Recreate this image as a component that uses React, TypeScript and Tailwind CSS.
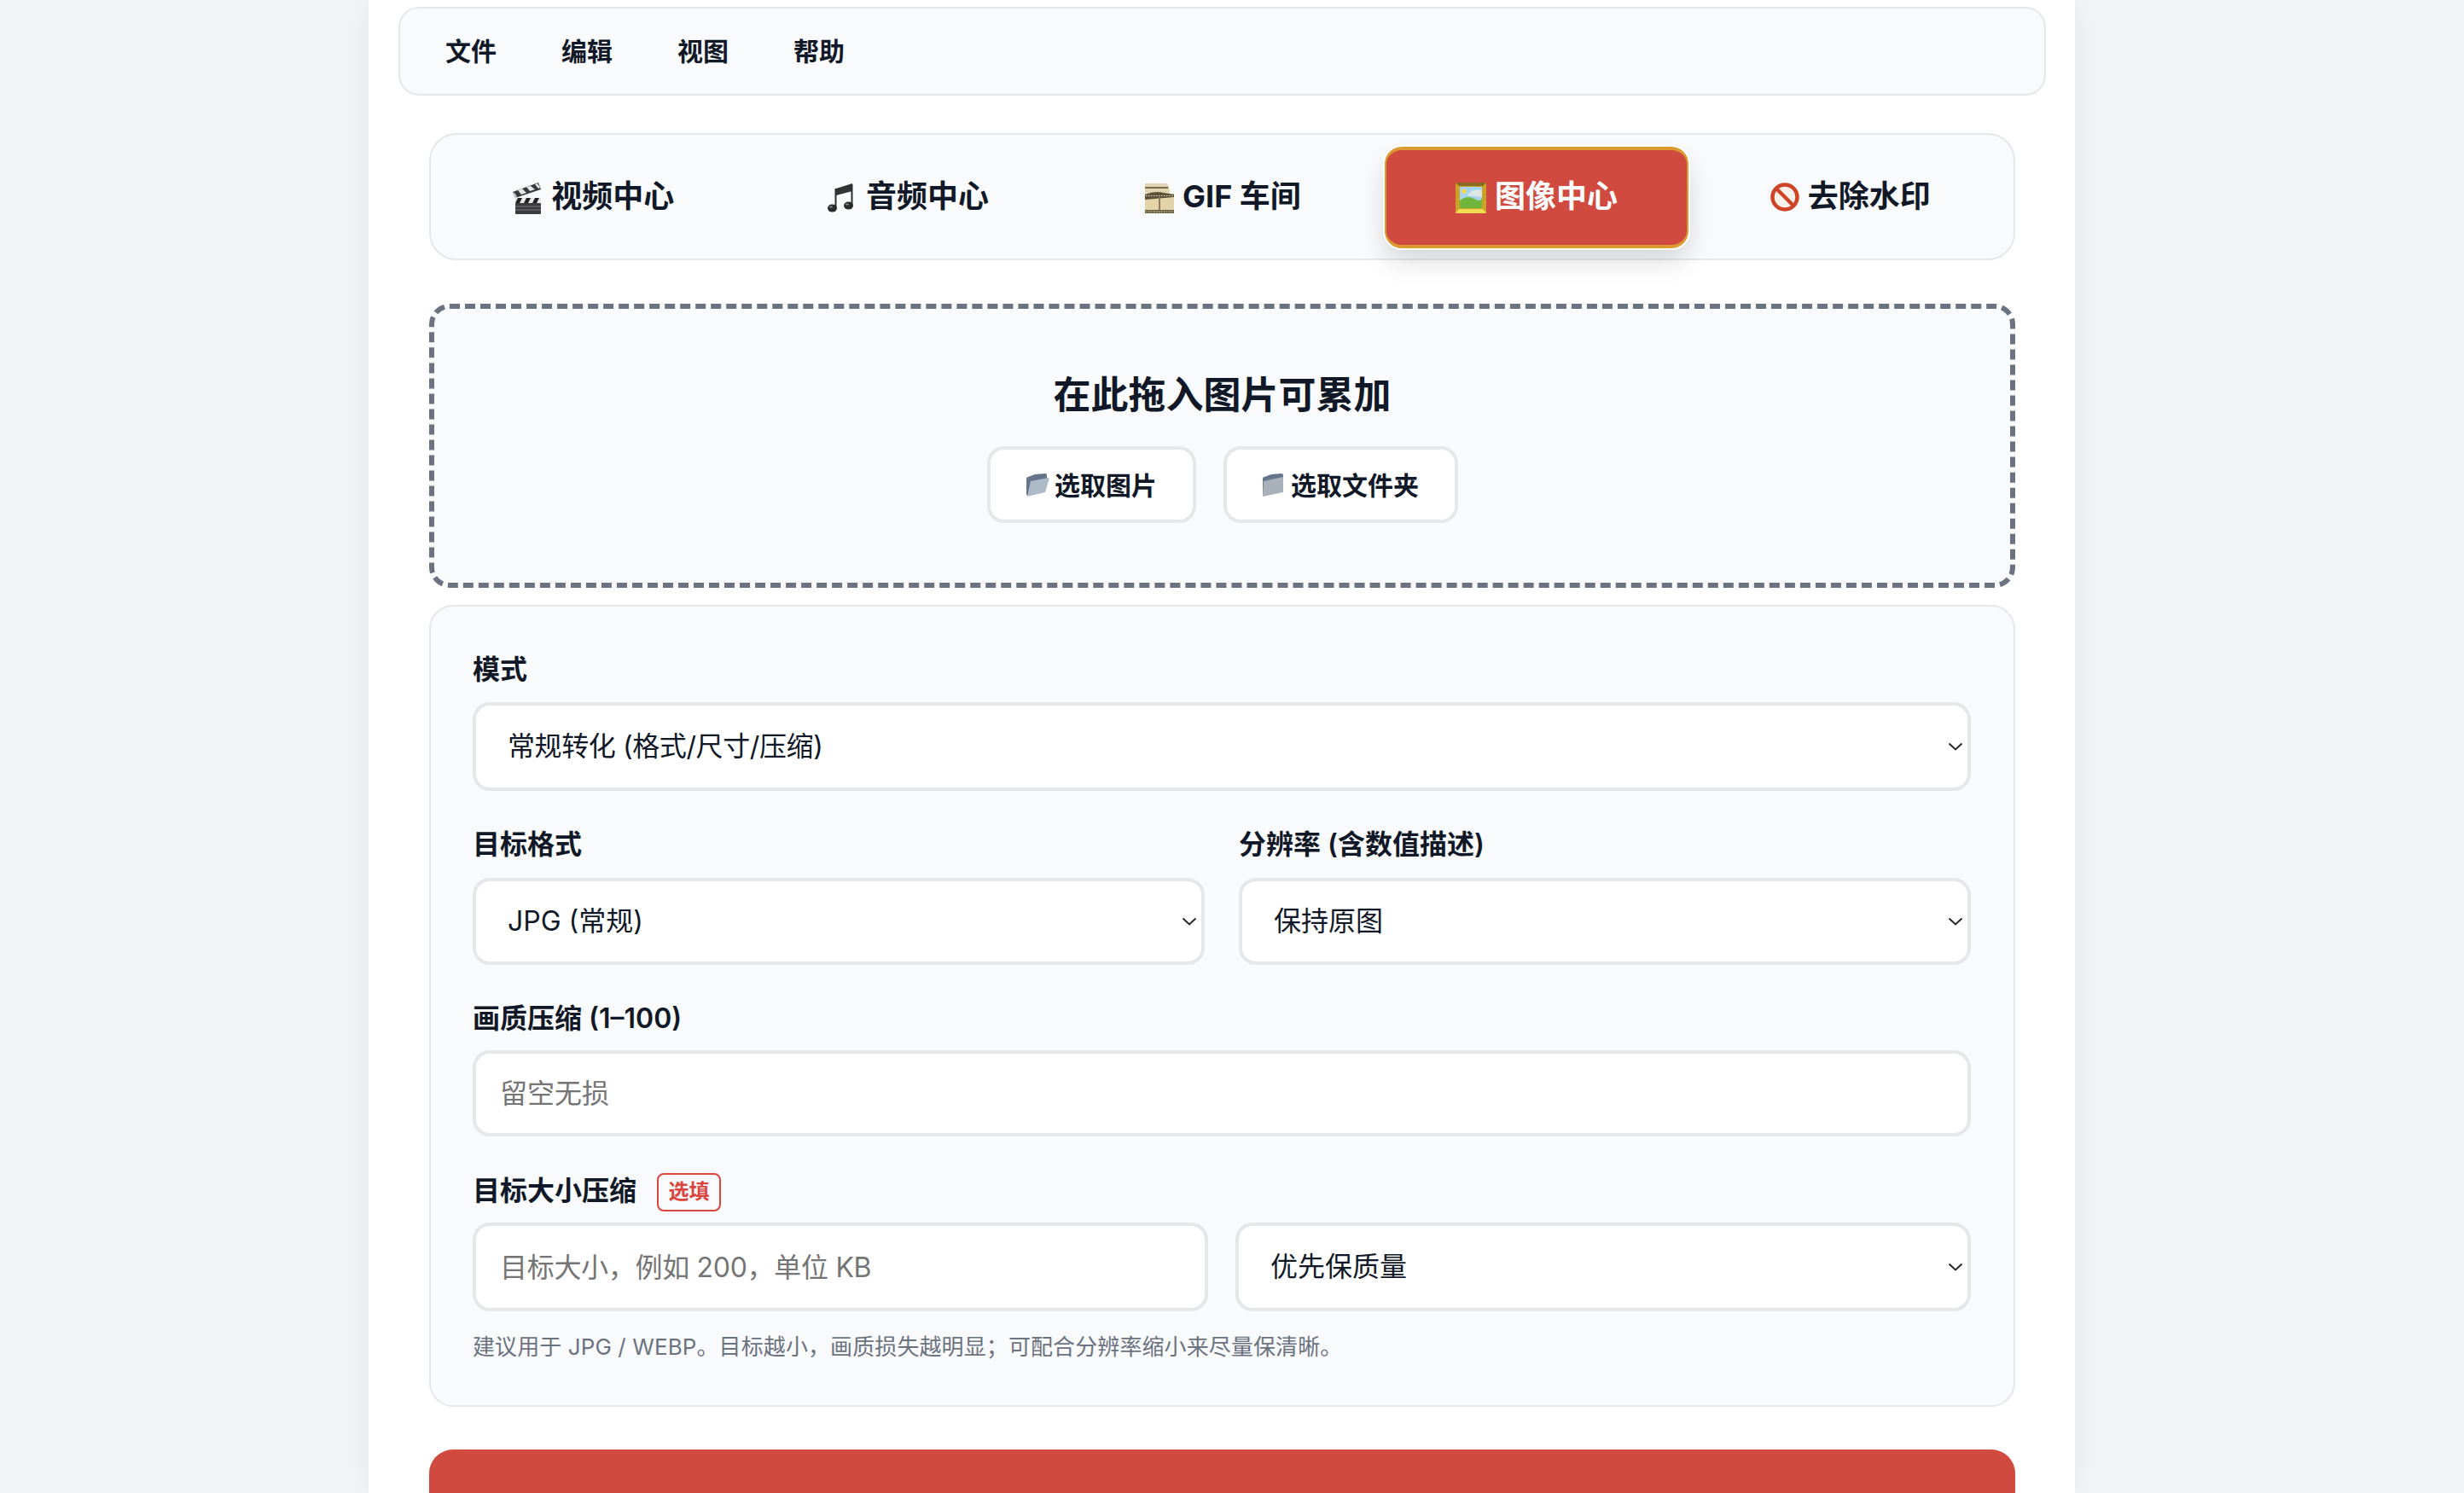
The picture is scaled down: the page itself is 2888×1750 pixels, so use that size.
import React from 'react';

const Clapper = () => (
  <svg width="36" height="38" viewBox="0 0 36 38" className="shrink-0">
    <path d="M1 12 L31 1 L34 9 L4 19 Z" fill="#3a3a3c" />
    <path d="M7 10 L12 8 L17 13 L11 15 Z M17 6 L22 5 L27 9 L21 11 Z M27 3 L30 2 L33 7 L31 8 Z" fill="#e8e8e8" />
    <path d="M1 12 L4 19 L8 22 L4 14 Z" fill="#c9c9c9" />
    <rect x="4" y="19" width="30" height="6" fill="#e6e6e6" />
    <path d="M7 19 L12 19 L9 25 L4 25 Z M17 19 L22 19 L19 25 L14 25 Z M27 19 L32 19 L29 25 L24 25 Z" fill="#222" />
    <rect x="4" y="25" width="30" height="13" rx="1" fill="#3b3b3d" />
    <path d="M4 29 H34 M4 33 H34" stroke="#77777a" strokeWidth="1" />
  </svg>
);

const MusicNote = () => (
  <svg width="36" height="38" viewBox="0 0 36 38" className="shrink-0">
    <path d="M11 8 L30 2 L30 11 L11 16 Z" fill="#333336" />
    <path d="M9.5 30 L9.5 8 L11.5 8 L11.5 30 Z M28.5 27 L28.5 3 L30.5 3 L30.5 27 Z" fill="#2e2e30" />
    <ellipse cx="6.5" cy="31" rx="5.5" ry="4.5" fill="#2b2b2d" />
    <ellipse cx="25.5" cy="28" rx="5.5" ry="4.5" fill="#2b2b2d" />
    <ellipse cx="5" cy="29.5" rx="2" ry="1" fill="#8c8c90" />
    <ellipse cx="24" cy="26.5" rx="2" ry="1" fill="#8c8c90" />
  </svg>
);

const FilmFrames = () => (
  <svg width="36" height="38" viewBox="0 0 36 38" className="shrink-0">
    <path d="M2 2 H27 Q31 4 31 12 V20 H2 Z" fill="#e2d5b2" />
    <rect x="2" y="14" width="34" height="23" fill="#e3d3a8" />
    <path d="M2 6 H29 V8 H2 Z" fill="#7a6d4e" />
    <path d="M2 15 Q14 10 24 13 L36 15 V18 L2 21 Z" fill="#5d5238" />
    <path d="M2 33 H36 V37 H2 Z" fill="#6b5f42" />
    <path d="M18 18 H20 V33 H18 Z" fill="#8c7f5e" />
    <path d="M3 35 H36" stroke="#e9dfc3" strokeWidth="1.2" strokeDasharray="1.5 1.5" />
    <path d="M3 16.5 H36" stroke="#e9dfc3" strokeWidth="1" strokeDasharray="1.5 1.5" />
  </svg>
);

const FramedPicture = () => (
  <svg width="36" height="38" viewBox="0 0 36 38" className="shrink-0">
    <rect x="0" y="1" width="36" height="36" fill="#c9a227" />
    <path d="M0 1 H36 L32 5 H4 Z" fill="#8a6a20" />
    <path d="M0 37 H36 L32 32 H4 Z" fill="#f2dc52" />
    <rect x="5" y="6" width="26" height="25" fill="#a6d4ee" />
    <circle cx="10" cy="11" r="2.6" fill="#f5d842" />
    <path d="M14 16 Q20 7 31 10 V18 Z" fill="#dfe6e6" />
    <path d="M5 22 Q14 15 22 20 T31 18 V31 H5 Z" fill="#6fb53c" />
  </svg>
);

const NoEntry = () => (
  <svg width="34" height="36" viewBox="0 0 34 36" className="shrink-0 -ml-[2px] -mt-[2px]">
    <circle cx="17" cy="18" r="14.5" fill="#f7f1ec" stroke="#cf4326" strokeWidth="4.5" />
    <path d="M7 8 L27 28" stroke="#cf4326" strokeWidth="4.5" />
  </svg>
);

const Folder = ({ open }: { open?: boolean }) => (
  <svg width="30" height="30" viewBox="0 0 30 30" className="shrink-0 -ml-[2px]">
    <path d="M3 8 Q3 6 5 6 L13 3 L25 2 Q27 2 27 4 V8 L9 12 L5 28 L3 27 Z" fill="#66768a" />
    {open ? (
      <path d="M8 11 L29 7 Q30 7 29.5 9 L25 24 L4 29 Z" fill="#adbac7" />
    ) : (
      <path d="M4 11 L27 6 V24 L3 29 Z" fill="#a9b2bb" />
    )}
  </svg>
);

const Chevron = () => (
  <svg width="18" height="10" viewBox="0 0 18 10" fill="none" className="absolute right-[9px] top-1/2 -translate-y-1/2 pointer-events-none">
    <path d="M1.5 1.5 L9 8.5 L16.5 1.5" stroke="#27272a" strokeWidth="2" />
  </svg>
);

const menus = ['文件', '编辑', '视图', '帮助'];

const tabs = [
  { icon: <Clapper />, label: '视频中心' },
  { icon: <MusicNote />, label: '音频中心' },
  { icon: <FilmFrames />, label: 'GIF 车间' },
  { icon: <FramedPicture />, label: '图像中心', active: true },
  { icon: <NoEntry />, label: '去除水印' }
];

const Select = ({ value, className = '', selectClass = '' }: { value: string; className?: string; selectClass?: string }) => (
  <div className={`relative ${className}`}>
    <select
      defaultValue={value}
      className={`w-full h-full appearance-none bg-white border-4 border-[#e5e7eb] rounded-[20px] pl-[37px] text-[32px] text-[#111827] outline-none ${selectClass}`}
    >
      <option>{value}</option>
    </select>
    <Chevron />
  </div>
);

const TextInput = ({ placeholder, className = '' }: { placeholder: string; className?: string }) => (
  <input
    placeholder={placeholder}
    className={`bg-white border-4 border-[#e5e7eb] rounded-[20px] pl-[28px] text-[32px] text-[#111827] placeholder:text-[#757575] outline-none ${className}`}
  />
);

const Label = ({ children, className = '' }: { children: React.ReactNode; className?: string }) => (
  <div className={`text-[32px] leading-[44px] font-semibold text-[#111827] ${className}`}>{children}</div>
);

const App = () => {
  return (
    <div
      lang="zh-CN"
      className="w-full h-[1750px] overflow-hidden bg-[#f3f4f6] font-['Inter','Noto_Sans_CJK_SC',sans-serif]"
    >
      <div className="w-[2864px]">
        <div className="mx-auto w-[2000px] h-[1750px] bg-white shadow-[0_0_40px_rgba(0,0,0,0.06)] pl-[35px] pr-[34px] pt-[8px]">
          {/* Menu bar */}
          <div className="h-[104px] border-2 border-[#e5e7eb] rounded-[24px] bg-[#f9fafb] flex items-center pl-[53px] gap-[76px]">
            {menus.map((m) => (
              <span key={m} className="text-[30px] font-semibold text-[#111827]">{m}</span>
            ))}
          </div>

          <div className="px-[36px]">
            {/* Tabs */}
            <div className="mt-[44px] h-[149px] border-2 border-[#e5e7eb] rounded-[32px] bg-[#f9fafb] grid grid-cols-5 gap-[12px] pl-[12px] pr-[12px] pt-[14px] pb-[12px]">
              {tabs.map((t) => (
                <div
                  key={t.label}
                  className={
                    t.active
                      ? 'flex items-center justify-center gap-[10px] rounded-[20px] bg-[#d04a40] border-y-4 border-x-2 border-[#dd9a30] ring-2 ring-white text-white text-[36px] font-bold shadow-[0_16px_30px_rgba(0,0,0,0.14)] h-[119px]'
                      : 'flex items-center justify-center gap-[10px] rounded-[20px] text-[#111827] text-[36px] font-bold h-[119px]'
                  }
                >
                  {t.icon}
                  <span className="pb-[3px]">{t.label}</span>
                </div>
              ))}
            </div>

            {/* Drop zone */}
            <div className="mt-[51px] h-[333px] border-[6px] border-dashed border-[#6b7280] rounded-[24px] bg-[#f9fafb] flex flex-col items-center pt-[71px]">
              <div className="text-[44px] leading-[60px] font-bold text-[#111827]">在此拖入图片可累加</div>
              <div className="mt-[30px] flex gap-[32px]">
                <button className="w-[245px] h-[90px] bg-white border-4 border-[#e5e7eb] rounded-[20px] flex items-center justify-center gap-[6px] text-[30px] font-semibold text-[#111827]">
                  <Folder open />
                  <span className="pt-[2px]">选取图片</span>
                </button>
                <button className="w-[275px] h-[90px] bg-white border-4 border-[#e5e7eb] rounded-[20px] flex items-center justify-center gap-[6px] text-[30px] font-semibold text-[#111827]">
                  <Folder />
                  <span className="pt-[2px]">选取文件夹</span>
                </button>
              </div>
            </div>

            {/* Settings */}
            <div className="mt-[20px] h-[940px] border-2 border-[#e5e7eb] rounded-[28px] bg-[#f9fafb] pl-[49px] pr-[50px] pt-[52px]">
              <Label>模式</Label>
              <Select value="常规转化 (格式/尺寸/压缩)" className="mt-[16px] h-[104px]" selectClass="tracking-[-0.4px]" />

              <div className="mt-[41px] grid grid-cols-2 gap-x-[40px]">
                <div>
                  <Label>目标格式</Label>
                  <Select value="JPG (常规)" className="mt-[17px] h-[102px]" />
                </div>
                <div>
                  <Label>分辨率 (含数值描述)</Label>
                  <Select value="保持原图" className="mt-[17px] h-[102px]" />
                </div>
              </div>

              <Label className="mt-[41px]">画质压缩 (1–100)</Label>
              <TextInput placeholder="留空无损" className="mt-[15px] w-full h-[101px]" />

              <div className="mt-[41px] flex items-center gap-[24px] h-[46px]">
                <Label>目标大小压缩</Label>
                <span className="w-[75px] h-[45px] mt-[2px] flex items-center justify-center border-2 border-[#d9463f] rounded-[8px] text-[24px] font-semibold text-[#d9463f]">选填</span>
              </div>
              <div className="mt-[14px] grid grid-cols-2 gap-x-[32px]">
                <TextInput placeholder="目标大小，例如 200，单位 KB" className="w-full h-[104px] tracking-[-0.3px]" />
                <Select value="优先保质量" className="h-[104px]" />
              </div>
              <div className="mt-[24px] text-[26px] leading-[36px] text-[#6b7280] tracking-[0.1px]">
                建议用于 JPG / WEBP。目标越小，画质损失越明显；可配合分辨率缩小来尽量保清晰。
              </div>
            </div>

            {/* Start button, cut off by the bottom of the page */}
            <div className="mt-[50px] h-[120px] rounded-[28px] bg-[#d04a40]" />
          </div>
        </div>
      </div>
    </div>
  );
};

export default App;
